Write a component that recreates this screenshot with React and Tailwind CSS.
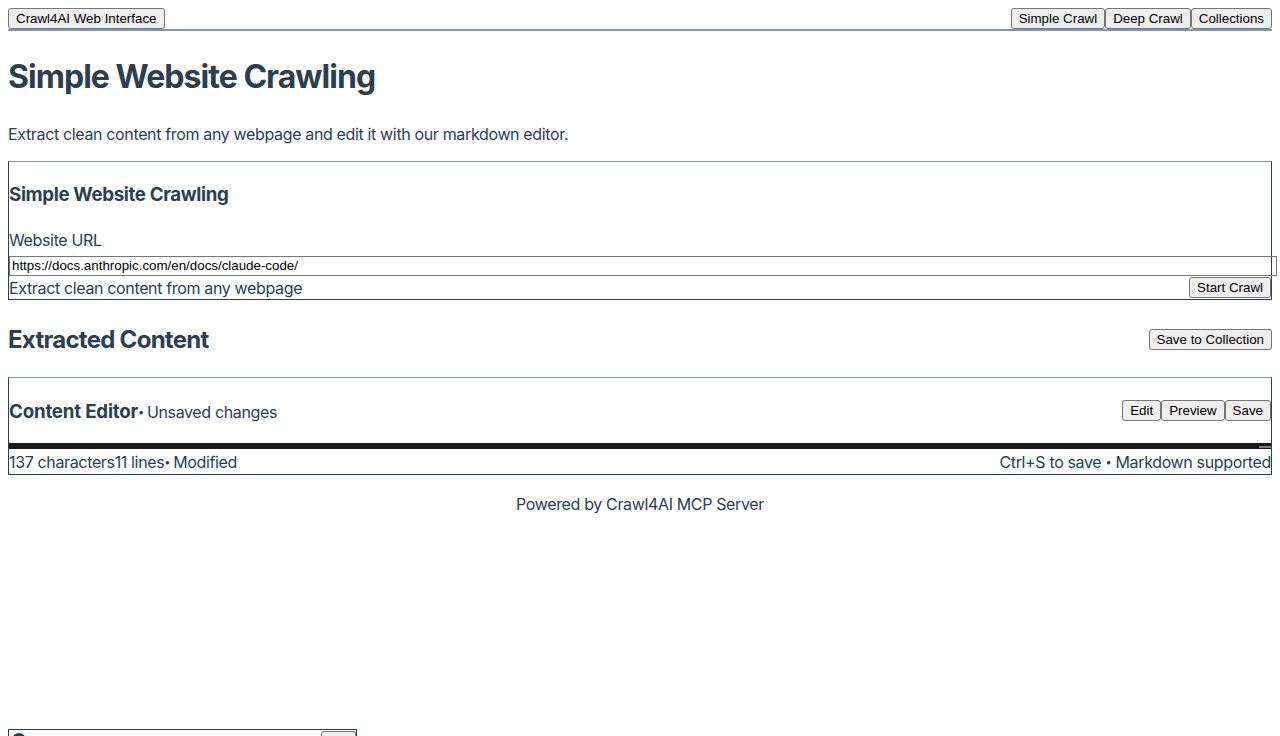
import React from "react";

const btn =
  "bg-[#efefef] border border-[#767676] rounded-[3px] px-[7px] h-[21px] leading-[15px] text-[13.333px] text-black tracking-normal font-['Liberation_Sans',Arial,sans-serif] whitespace-nowrap";

export default function App() {
  const navTabs = ["Simple Crawl", "Deep Crawl", "Collections"];

  return (
    <div className="min-h-screen bg-white text-[#2c3e50] font-['Inter',sans-serif] tracking-[-0.022em] px-2 pt-2">
      {/* top nav */}
      <header className="flex justify-between items-end border-b-2 border-[#8694a4]">
        <button className={btn}>Crawl4AI Web Interface</button>
        <div className="flex">
          {navTabs.map((t) => (
            <button key={t} className={btn}>
              {t}
            </button>
          ))}
        </div>
      </header>

      <main>
        <h1 className="mt-[27px] text-[32px] leading-[38px] font-bold tracking-[-0.03em]">
          Simple Website Crawling
        </h1>
        <p className="mt-[26px] text-base leading-6">
          Extract clean content from any webpage and edit it with our markdown editor.
        </p>

        {/* crawl card */}
        <section className="mt-[15px] border border-[#2c3e50] border-t-[#8694a4]">
          <h3 className="mt-[21px] text-[18.72px] leading-6 font-bold">
            Simple Website Crawling
          </h3>
          <label className="block mt-[21px] text-base leading-6">Website URL</label>
          <input
            readOnly
            value="https://docs.anthropic.com/en/docs/claude-code/"
            className="block mt-[4px] box-content w-full h-[18px] px-[2px] border border-[#767676] text-[13.333px] text-black tracking-normal font-['Liberation_Sans',Arial,sans-serif] outline-none"
          />
          <div className="flex justify-between items-center h-[23px]">
            <span className="text-base leading-6">Extract clean content from any webpage</span>
            <button className={btn}>Start Crawl</button>
          </div>
        </section>

        <div className="mt-[24px] h-[32px] flex justify-between items-start">
          <h2 className="text-[24px] leading-8 font-bold tracking-[-0.03em]">Extracted Content</h2>
          <button className={btn + " mt-[5px]"}>Save to Collection</button>
        </div>

        {/* editor card */}
        <section className="mt-[21px] border border-[#2c3e50] border-t-[#8694a4]">
          <div className="h-[65px] flex justify-between items-center">
            <div className="flex items-baseline mt-[3px]">
              <span className="text-[18.72px] font-bold tracking-[-0.01em]">Content Editor</span>
              <span className="text-base">
                <span className="text-[11px] align-[2px] mr-[3px]">•</span>Unsaved changes
              </span>
            </div>
            <div className="flex">
              <button className={btn}>Edit</button>
              <button className={btn}>Preview</button>
              <button className={btn}>Save</button>
            </div>
          </div>
          <div className="h-[6px] bg-[#1b1b1b] flex justify-end items-end">
            <div className="w-[12px] h-[2px] bg-[#7d7d7d] mb-[1px]" />
          </div>
          <div className="h-[25px] flex justify-between items-center text-base">
            <span>
              137 characters11 lines<span className="text-[11px] align-[2px] mr-[3px]">•</span>Modified
            </span>
            <span>
              Ctrl+S to save <span className="text-[11px] align-[2px]">•</span> Markdown supported
            </span>
          </div>
        </section>

        <p className="mt-[17px] text-center text-base leading-6">
          Powered by Crawl4AI MCP Server
        </p>

        {/* bottom widget */}
        <div className="mt-[213px] w-[349px] h-[40px] border border-[#2c3e50] flex justify-between items-start pl-[3px] pt-[1px]">
          <div className="w-[14px] h-[14px] rounded-full bg-[#2c3e50] mt-[2px]" />
          <button className={btn + " w-[35px]"}></button>
        </div>
      </main>
    </div>
  );
}
